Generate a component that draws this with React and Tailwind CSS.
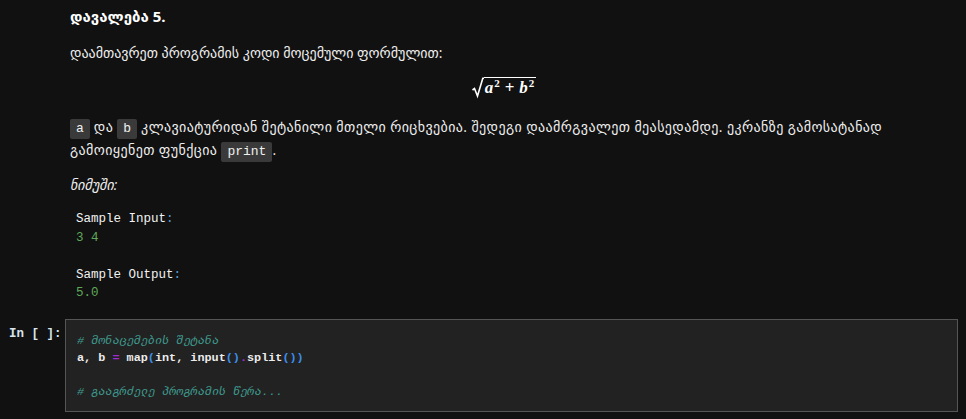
import React from "react";

const body = { fontFamily: '"Open Sans", "DejaVu Sans", sans-serif' };
const mono = { fontFamily: '"Liberation Mono", "DejaVu Sans Mono", "DejaVu Sans", monospace' };

function Code({ children }) {
  return (
    <span
      className="inline-block rounded-[2px] bg-[#3a3a3a] px-[6px] leading-[20px] text-[13px] text-[#f0f0f0] tracking-normal"
      style={mono}
    >
      {children}
    </span>
  );
}

function Formula() {
  return (
    <div className="flex justify-center h-[24px] mt-[12px] pr-[20px]">
      <div className="flex items-end" style={{ fontFamily: '"Liberation Serif", serif' }}>
        <svg width="12" height="22" viewBox="0 0 12 22" className="mb-[1px]">
          <path d="M0.5 13 L2.5 11.5 L5.5 19 L10.8 1.2 L12 1.2" fill="none" stroke="#ffffff" strokeWidth="1.6" />
        </svg>
        <div className="border-t-[1.5px] border-white text-white font-bold italic text-[17px] leading-[19px] pl-[1px] pr-[2px] mb-[1px] whitespace-nowrap">
          a<span className="not-italic text-[11px] relative -top-[6px] ml-[1px]">2</span>
          <span className="not-italic mx-[5px]">+</span>b
          <span className="not-italic text-[11px] relative -top-[6px] ml-[1px]">2</span>
        </div>
      </div>
    </div>
  );
}

export default function App() {
  return (
    <div className="w-full min-h-[419px] bg-[#111111] text-[#eeeeee]" style={body}>
      <div className="pl-[70px] pr-[8px] pt-[5px]">
        <div className="font-bold text-[15px] leading-[22px] text-white">დავალება 5.</div>
        <p className="mt-[15px] text-[14px] leading-[22px]">
          დაამთავრეთ პროგრამის კოდი მოცემული ფორმულით:
        </p>
        <Formula />
        <p className="mt-[16px] text-[14px] leading-[22px] tracking-[0.4px]">
          <Code>a</Code> და <Code>b</Code> კლავიატურიდან შეტანილი მთელი რიცხვებია. შედეგი დაამრგვალეთ
          მეასედამდე. ეკრანზე გამოსატანად გამოიყენეთ ფუნქცია <Code>print</Code>.
        </p>
        <p className="mt-[12px] text-[14px] leading-[22px] italic">ნიმუში:</p>
        <pre className="mt-[14px] pl-[6px] text-[12.5px] leading-[18.5px]" style={mono}>
          <div>
            <span className="text-[#f2f2f2]">Sample Input</span>
            <span className="text-[#569cd6]">:</span>
          </div>
          <div className="text-[#5fa85a]">3 4</div>
          <div>&nbsp;</div>
          <div>
            <span className="text-[#f2f2f2]">Sample Output</span>
            <span className="text-[#569cd6]">:</span>
          </div>
          <div className="text-[#5fa85a]">5.0</div>
        </pre>
      </div>
      <div className="flex mt-[16px] pr-[8px]">
        <div
          className="w-[65px] shrink-0 pl-[9px] pt-[7px] text-[12.5px] font-bold leading-[17px] text-[#d8e4f0]"
          style={mono}
        >
          In [ ]:
        </div>
        <div className="flex-1 h-[93px] border border-[#555555] bg-[#222222] pl-[11px] pt-[13px]">
          <pre className="text-[11.8px] leading-[17px] text-[#ececec]" style={mono}>
            <div className="italic text-[#3f9a8e]"># მონაცემების შეტანა</div>
            <div className="font-bold">
              a, b <span className="text-[#a22cd6]">=</span> map<span className="text-[#3b8eea]">(</span>int, input
              <span className="text-[#3b8eea]">()</span>
              <span className="text-[#a22cd6]">.</span>split<span className="text-[#3b8eea]">())</span>
            </div>
            <div>&nbsp;</div>
            <div className="italic text-[#3f9a8e]"># გააგრძელე პროგრამის წერა...</div>
          </pre>
        </div>
      </div>
    </div>
  );
}
